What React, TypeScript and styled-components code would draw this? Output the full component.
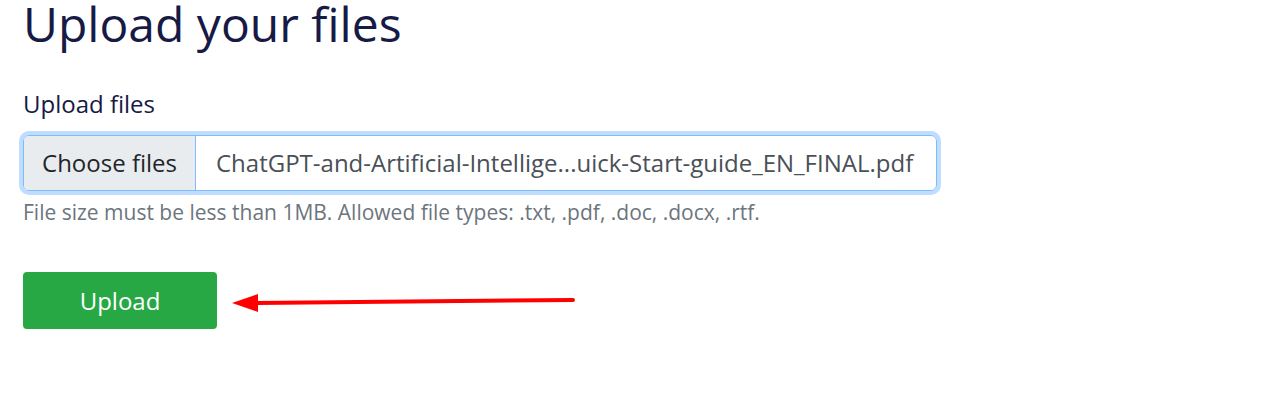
import React from "react";
import { styled, createGlobalStyle } from "styled-components";

const GlobalStyle = createGlobalStyle`
  body {
    margin: 0;
    background: #ffffff;
    font-family: "Open Sans", "Liberation Sans", sans-serif;
  }
`;

const Page = styled.div`
  padding: 0 23px;
  width: 914px;
`;

const Title = styled.h1`
  margin: -5px 0 0;
  font-size: 48px;
  font-weight: 400;
  line-height: 1.2;
  color: #161a45;
`;

const Label = styled.label`
  display: block;
  margin-top: 33px;
  font-size: 24px;
  line-height: 1.5;
  color: #161a45;
`;

const FileInput = styled.div`
  display: flex;
  margin-top: 13px;
  height: 56px;
  box-sizing: border-box;
  border: 1px solid #80bdff;
  border-radius: 6px;
  box-shadow: 0 0 0 4px rgba(0, 123, 255, 0.25);
  overflow: hidden;
  font-size: 24px;
`;

const ChooseButton = styled.span`
  display: flex;
  align-items: center;
  justify-content: center;
  width: 172px;
  box-sizing: border-box;
  background: #e9ecef;
  border-right: 1px solid #80bdff;
  color: #212529;
`;

const FileName = styled.span`
  display: flex;
  align-items: center;
  padding: 0 20px;
  color: #495057;
  white-space: nowrap;
`;

const Help = styled.div`
  margin-top: 6px;
  font-size: 21px;
  line-height: 1.5;
  color: #6c757d;
`;

const Actions = styled.div`
  display: flex;
  align-items: center;
  margin-top: 44px;
`;

const UploadButton = styled.button`
  width: 194px;
  height: 57px;
  border: none;
  border-radius: 4px;
  background: #28a745;
  color: #ffffff;
  font-family: inherit;
  font-size: 24px;
  padding: 0;
`;

const Arrow = styled.svg`
  margin-left: 15px;
  display: block;
`;

export default function App() {
  return (
    <>
      <GlobalStyle />
      <Page>
        <Title>Upload your files</Title>
        <Label>Upload files</Label>
        <FileInput>
          <ChooseButton>Choose files</ChooseButton>
          <FileName>ChatGPT-and-Artificial-Intellige...uick-Start-guide_EN_FINAL.pdf</FileName>
        </FileInput>
        <Help>File size must be less than 1MB. Allowed file types: .txt, .pdf, .doc, .docx, .rtf.</Help>
        <Actions>
          <UploadButton>Upload</UploadButton>
          <Arrow width="346" height="24" viewBox="0 0 346 24">
            <path d="M24 14 L341 11" stroke="#ff0000" strokeWidth="4" strokeLinecap="round" />
            <polygon points="0,14 26,5 26,23" fill="#ff0000" />
          </Arrow>
        </Actions>
      </Page>
    </>
  );
}
